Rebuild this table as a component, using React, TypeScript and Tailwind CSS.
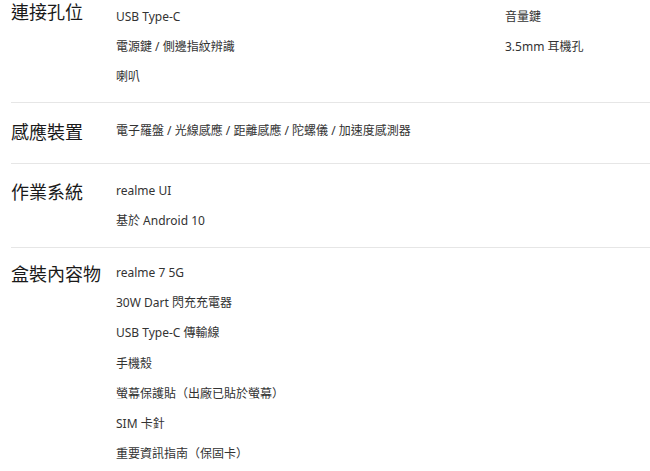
import React from "react";

const font = { fontFamily: '"Noto Sans", "Noto Sans CJK TC", sans-serif' };

function Items({ items, cols = 1 }: { items: string[]; cols?: number }) {
  return (
    <div className={cols === 2 ? "grid grid-cols-[389px_1fr]" : "flex flex-col"}>
      {items.map((t, i) => (
        <div key={i} className="h-[30px] leading-[30px] text-[12px] text-[#333] whitespace-nowrap">
          {t}
        </div>
      ))}
    </div>
  );
}

export default function App() {
  return (
    <div className="w-[650px] h-[471px] overflow-hidden bg-white pl-[11px]" style={font}>
      <div className="flex border-b border-[#e6e6e6] pt-[2px] pb-[10px]">
        <div className="w-[105px] shrink-0 text-[18px] leading-[30px] text-[#1a1a1a] -mt-[5px]">連接孔位</div>
        <Items cols={2} items={["USB Type-C", "音量鍵", "電源鍵 / 側邊指紋辨識", "3.5mm 耳機孔", "喇叭"]} />
      </div>
      <div className="flex border-b border-[#e6e6e6] pt-[13px] pb-[16px]">
        <div className="w-[105px] shrink-0 text-[18px] leading-[30px] text-[#1a1a1a] mt-[1px]">感應裝置</div>
        <Items items={["電子羅盤 / 光線感應 / 距離感應 / 陀螺儀 / 加速度感測器"]} />
      </div>
      <div className="flex border-b border-[#e6e6e6] pt-[12px] pb-[11px]">
        <div className="w-[105px] shrink-0 text-[18px] leading-[30px] text-[#1a1a1a] mt-[1px]">作業系統</div>
        <Items items={["realme UI", "基於 Android 10"]} />
      </div>
      <div className="flex pt-[10px]">
        <div className="w-[105px] shrink-0 text-[18px] leading-[30px] text-[#1a1a1a] mt-[1px]">盒裝內容物</div>
        <div className="flex flex-col">
          {[
            "realme 7 5G",
            "30W Dart 閃充充電器",
            "USB Type-C 傳輸線",
            "手機殼",
            "螢幕保護貼（出廠已貼於螢幕）",
            "SIM 卡針",
            "重要資訊指南（保固卡）",
          ].map((t, i) => (
            <div key={i} className="h-[30.2px] leading-[30px] text-[12px] text-[#333] whitespace-nowrap">
              {t}
            </div>
          ))}
        </div>
      </div>
    </div>
  );
}
